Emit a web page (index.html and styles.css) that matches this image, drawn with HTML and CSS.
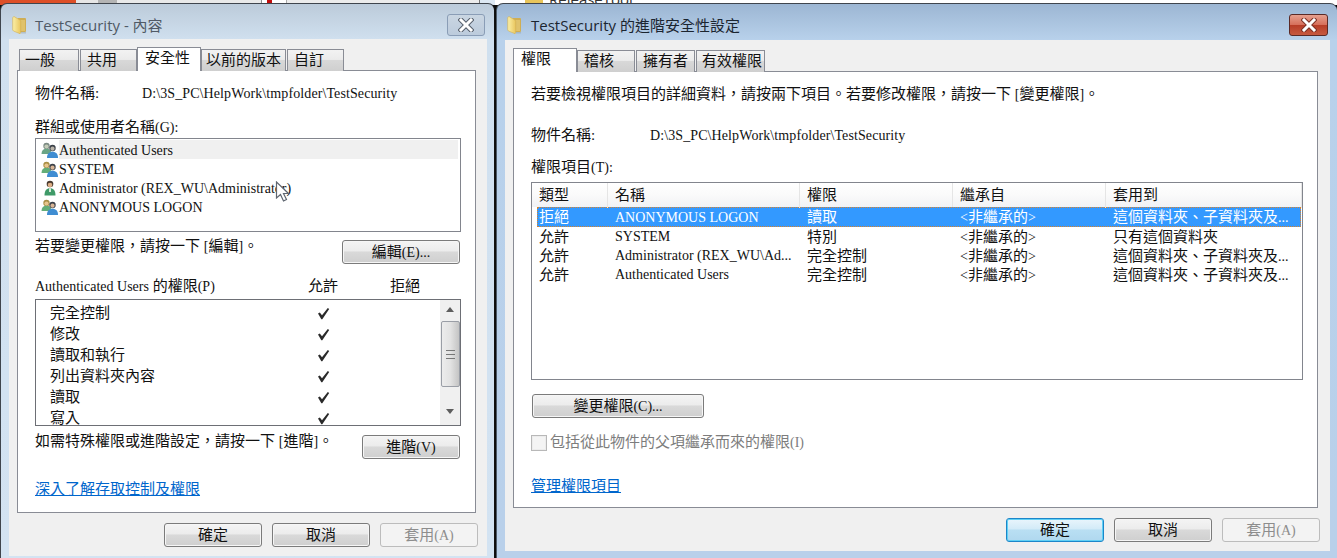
FILE: index.html
```html
<!DOCTYPE html>
<html lang="zh-Hant">
<head>
<meta charset="utf-8">
<title>TestSecurity</title>
<link rel="stylesheet" href="styles.css">
</head>
<body>
<svg class="defs" width="0" height="0" aria-hidden="true">
  <defs>
    <linearGradient id="fg" x1="0" x2="1" y1="0" y2="0">
      <stop offset="0" stop-color="#fbf0a8"/>
      <stop offset="1" stop-color="#e9c65e"/>
    </linearGradient>
    <symbol id="folder" viewBox="0 0 15 18">
      <path d="M6 2h7.500l.5 1v12.500l-1 .5H6z" fill="#cfae55"/>
      <path d="M7.500 4h5.500v11H7.500z" fill="#e0c26b"/>
      <path d="M.7 1.500 2 .5l6 3.500.7 1v12l-.7.700L1.500 15 .7 14z" fill="url(#fg)" stroke="#d2ae50" stroke-width=".6"/>
      <path d="M9 16h5v1.500H9z" fill="#9aa3a8" opacity=".5"/>
    </symbol>
    <symbol id="user" viewBox="0 0 16 16">
      <circle cx="8" cy="4" r="3.300" fill="#4a3b30"/>
      <path d="M2.500 15.500c0-5 2-7.300 5.500-7.300s5.500 2.300 5.500 7.300z" fill="#3f9a68"/>
      <circle cx="8" cy="5" r="2.300" fill="#dcae86"/>
      <path d="M7 8.300h2V12H7z" fill="#d8e8d8"/>
    </symbol>
    <symbol id="users" viewBox="0 0 18 16">
      <circle cx="5.500" cy="4" r="3.200" fill="#a98f45"/>
      <circle cx="5.500" cy="4.600" r="2.100" fill="#e8c58e"/>
      <path d="M.5 12c0-3.500 1.800-5.200 5-5.200s5 1.700 5 5.200z" fill="#63ad78"/>
      <circle cx="11.500" cy="6" r="3.200" fill="#3b4149"/>
      <circle cx="11.500" cy="6.700" r="2.100" fill="#d8b596"/>
      <path d="M6 16c0-4 2-6.200 5.500-6.200S17 12 17 16z" fill="#3f8dd2"/>
    </symbol>
    <symbol id="usersg" viewBox="0 0 18 16">
      <circle cx="5.500" cy="4" r="3.200" fill="#7d8b84"/>
      <circle cx="5.500" cy="4.600" r="2.100" fill="#c4cbb8"/>
      <path d="M.5 12c0-3.500 1.800-5.200 5-5.200s5 1.700 5 5.200z" fill="#6aa586"/>
      <circle cx="11.500" cy="6" r="3.200" fill="#3b4149"/>
      <circle cx="11.500" cy="6.700" r="2.100" fill="#b9b3a8"/>
      <path d="M6 16c0-4 2-6.200 5.500-6.200S17 12 17 16z" fill="#3f8dd2"/>
    </symbol>
    <symbol id="check" viewBox="0 0 13 13">
      <path d="M1 6.500 2.800 5.500 5 8.300 10.800 1 12.200 2 5.300 12.300H4.300z" fill="#2a2a2a"/>
    </symbol>
    <symbol id="xmark" viewBox="0 0 16 14">
      <path d="M3 2l10 10M13 2 3 12" stroke-linecap="square" fill="none" stroke="currentColor" stroke-width="5"/>
      <path d="M3 2l10 10M13 2 3 12" stroke-linecap="square" fill="none" stroke="#fff" stroke-width="3"/>
    </symbol>
  </defs>
</svg>

<div class="backdrop">
  <i class="seg seg-red"></i><i class="seg seg-grey"></i><i class="seg seg-dark"></i><i class="seg seg-light"></i><i class="seg seg-tab"></i><i class="seg seg-crimson"></i><i class="seg seg-white"></i><i class="seg seg-tab2"></i><i class="seg seg-sky"></i><i class="seg seg-gap"></i>
  <i class="seg seg-folder"></i>
  <i class="seg seg-pane"><span class="peek">ReleaseTool</span></i>
</div>

<section class="win win-left">
  <header class="titlebar">
    <svg class="ticon"><use href="#folder"/></svg>
    <h1 class="ttext">TestSecurity - 內容</h1>
    <span class="close close-off"><svg class="xicon"><use href="#xmark"/></svg></span>
  </header>
  <div class="client client-left">
    <nav class="tabs">
      <span class="tab t-a">一般</span>
      <span class="tab t-b">共用</span>
      <span class="tab active t-c">安全性</span>
      <span class="tab t-d">以前的版本</span>
      <span class="tab t-e">自訂</span>
    </nav>
    <div class="panel panel-left">
      <div class="objrow"><span class="objlabel">物件名稱:</span><span class="lat path">D:\3S_PC\HelpWork\tmpfolder\TestSecurity</span></div>
      <div class="lbl lbl-group">群組或使用者名稱<span class="lat">(G):</span></div>
      <ul class="userlist">
        <li class="u selu"><svg class="uicon"><use href="#usersg"/></svg><span class="ubar lat">Authenticated Users</span></li>
        <li class="u"><svg class="uicon"><use href="#users"/></svg><span class="ubar lat">SYSTEM</span></li>
        <li class="u"><svg class="uicon"><use href="#user"/></svg><span class="ubar lat">Administrator (REX_WU\Administrator)</span></li>
        <li class="u"><svg class="uicon"><use href="#users"/></svg><span class="ubar lat">ANONYMOUS LOGON</span></li>
        <li class="cursor"><svg width="16" height="22" viewBox="0 0 16 22"><path d="M1.500 1v16l4-3.500 3 6.500 3-1.500-3-6h5z" fill="#fff" stroke="#5f6670" stroke-width="1.200"/></svg></li>
      </ul>
      <div class="actrow actrow-a">
        <span>若要變更權限&#xFF0C;請按一下 <span class="lat">[</span>編輯<span class="lat">]</span>。</span>
        <button class="btn btn-edit">編輯<span class="lat">(E)...</span></button>
      </div>
      <div class="permhead"><span class="permtitle"><span class="lat">Authenticated Users</span> 的權限<span class="lat">(P)</span></span><span class="pa">允許</span><span class="pd">拒絕</span></div>
      <div class="permbox">
        <div class="permrows">
          <div class="pr"><span>完全控制</span><svg class="chk"><use href="#check"/></svg></div>
          <div class="pr"><span>修改</span><svg class="chk"><use href="#check"/></svg></div>
          <div class="pr"><span>讀取和執行</span><svg class="chk"><use href="#check"/></svg></div>
          <div class="pr"><span>列出資料夾內容</span><svg class="chk"><use href="#check"/></svg></div>
          <div class="pr"><span>讀取</span><svg class="chk"><use href="#check"/></svg></div>
          <div class="pr"><span>寫入</span><svg class="chk"><use href="#check"/></svg></div>
        </div>
        <div class="scroll">
          <i class="arrow up"></i>
          <div class="thumb"><i class="grip"></i></div>
          <i class="arrow down"></i>
        </div>
      </div>
      <div class="actrow actrow-b">
        <span>如需特殊權限或進階設定&#xFF0C;請按一下 <span class="lat">[</span>進階<span class="lat">]</span>。</span>
        <button class="btn btn-adv">進階<span class="lat">(V)</span></button>
      </div>
      <a class="link link-left" href="#">深入了解存取控制及權限</a>
    </div>
    <div class="foot foot-left">
      <button class="btn btn-foot">確定</button>
      <button class="btn btn-foot">取消</button>
      <button class="btn btn-foot off">套用<span class="lat">(A)</span></button>
    </div>
  </div>
</section>

<section class="win win-right">
  <header class="titlebar titlebar-r">
    <svg class="ticon"><use href="#folder"/></svg>
    <h1 class="ttext dark">TestSecurity 的進階安全性設定</h1>
    <span class="close close-red"><svg class="xicon"><use href="#xmark"/></svg></span>
  </header>
  <div class="client client-right">
    <nav class="tabs tabs-r">
      <span class="tab active r-a">權限</span>
      <span class="tab r-b">稽核</span>
      <span class="tab r-c">擁有者</span>
      <span class="tab r-d">有效權限</span>
    </nav>
    <div class="panel panel-right">
      <p class="desc">若要檢視權限項目的詳細資料&#xFF0C;請按兩下項目。若要修改權限&#xFF0C;請按一下 <span class="lat">[</span>變更權限<span class="lat">]</span>。</p>
      <div class="objrow objrow-r"><span class="objlabel">物件名稱:</span><span class="lat path">D:\3S_PC\HelpWork\tmpfolder\TestSecurity</span></div>
      <div class="lbl lbl-entries">權限項目<span class="lat">(T):</span></div>
      <div class="table">
        <div class="thead">
          <span class="th">類型</span><span class="th">名稱</span><span class="th">權限</span><span class="th">繼承自</span><span class="th">套用到</span>
        </div>
        <div class="tr sel"><span>拒絕</span><span class="lat">ANONYMOUS LOGON</span><span>讀取</span><span><span class="lat">&lt;</span>非繼承的<span class="lat">&gt;</span></span><span>這個資料夾、子資料夾及<span class="lat">...</span></span></div>
        <div class="tr"><span>允許</span><span class="lat">SYSTEM</span><span>特別</span><span><span class="lat">&lt;</span>非繼承的<span class="lat">&gt;</span></span><span>只有這個資料夾</span></div>
        <div class="tr"><span>允許</span><span class="lat">Administrator (REX_WU\Ad...</span><span>完全控制</span><span><span class="lat">&lt;</span>非繼承的<span class="lat">&gt;</span></span><span>這個資料夾、子資料夾及<span class="lat">...</span></span></div>
        <div class="tr"><span>允許</span><span class="lat">Authenticated Users</span><span>完全控制</span><span><span class="lat">&lt;</span>非繼承的<span class="lat">&gt;</span></span><span>這個資料夾、子資料夾及<span class="lat">...</span></span></div>
      </div>
      <button class="btn btn-change">變更權限<span class="lat">(C)...</span></button>
      <div class="inherit"><i class="cb"></i><span>包括從此物件的父項繼承而來的權限<span class="lat">(I)</span></span></div>
      <a class="link link-right" href="#">管理權限項目</a>
    </div>
    <div class="foot foot-right">
      <button class="btn btn-foot def">確定</button>
      <button class="btn btn-foot">取消</button>
      <button class="btn btn-foot off">套用<span class="lat">(A)</span></button>
    </div>
  </div>
</section>
</body>
</html>
```
FILE: styles.css
```css
* { box-sizing: border-box; }
html, body { margin: 0; padding: 0; }
body {
  width: 1337px;
  height: 558px;
  overflow: hidden;
  position: relative;
  background: #0c0c0c;
  font-family: "Liberation Serif", "Noto Sans CJK TC", serif;
  font-size: 15px;
  line-height: 19px;
  color: #111;
}
.lat { font-size: 14px; }
.path { letter-spacing: .1px; }
.defs { position: absolute; }

.backdrop { display: flex; height: 5px; overflow: hidden; background: #fff; }
.seg { display: block; height: 5px; flex: none; }
.seg-red { width: 76px; background: #dd4f28; }
.seg-grey { width: 22px; background: #e6e6e6; }
.seg-dark { width: 19px; background: #b4b4b4; }
.seg-light { width: 144px; background: #e9e9e9; }
.seg-tab { width: 6px; background: #fff; border-left: 1px solid #8c8c8c; }
.seg-crimson { width: 5px; background: #c00d0d; }
.seg-white { width: 15px; background: #fff; border-right: 1px solid #aaa; }
.seg-tab2 { width: 193px; background: #ececec; border-right: 1px solid #777; }
.seg-sky { width: 15px; background: #dce8f3; }
.seg-gap { width: 30px; background: #fff; }
.seg-folder { width: 18px; background: #e8c55b; }
.seg-pane { width: 794px; background: #fff; padding-left: 6px; overflow: hidden; }
.peek { display: block; margin-top: -9px; font: 15px/16px "Open Sans", sans-serif; color: #333; }

.win {
  position: absolute;
  top: 3px;
  border: 1px solid #3f454d;
  border-bottom: 0;
  border-radius: 7px 7px 0 0;
  overflow: hidden;
}
.win-left { left: 0; width: 495px; height: 555px; background: linear-gradient(#bccbda, #d0e0ef 36px, #d3e3f2); border-right-color: #111; }
.win-right { left: 496px; width: 841px; height: 555px; background: linear-gradient(#9cb6d3, #b8d1eb 36px, #b9d0ea); border-left-color: #4c5967; border-right: 0; }

.titlebar { height: 35px; display: flex; align-items: center; padding: 7px 9px 0 11px; }
.titlebar-r { padding: 7px 9px 0 10px; }
.ticon { width: 15px; height: 18px; flex: none; }
.ttext { margin: 0 0 0 8px; font: 400 15px/20px "Open Sans", "Noto Sans CJK TC", sans-serif; color: #505a66; flex: 1; }
.ttext.dark { color: #1b2530; margin-left: 9px; }
.close { display: flex; width: 38px; height: 22px; align-items: center; justify-content: center; border-radius: 3px; }
.close-off { border: 1px solid #8a9db6; background: linear-gradient(#cad6e2, #bccbdc); color: #565f6b; }
.close-red { border: 1px solid #5b2a26; width: 39px; background: linear-gradient(#e6a08e, #d6705c 48%, #b73d28 52%, #c65a40); color: #7c3226; }
.xicon { width: 16px; height: 14px; }

.client { background: #f0f0f0; display: flex; flex-direction: column; }
.client-left { margin: 0 7px 0 8px; height: 517px; padding: 8px 0 0 8px; }
.client-right { margin: 1px 7px 0 8px; height: 511px; padding: 8px 0 0 8px; }

.tabs { display: flex; height: 24px; align-items: flex-end; position: relative; z-index: 1; margin-bottom: -1px; padding-left: 2px; }
.tabs-r { padding-left: 0; }
.tab {
  height: 22px;
  flex: none;
  padding-left: 6px;
  border: 1px solid #898c95;
  border-bottom: 0;
  background: linear-gradient(#f2f2f2, #ebebeb 45%, #d8d8d8 50%, #cfcfcf);
  line-height: 21px;
  white-space: nowrap;
}
.tab.active { height: 24px; background: #fff; line-height: 21px; }
.t-a { width: 60px; margin-right: 1px; padding-left: 5px; }
.t-b { width: 57px; }
.t-c { width: 64px; padding-left: 7px; }
.t-d { width: 85px; margin-right: 1px; padding-left: 4px; }
.t-e { width: 57px; }
.r-a { width: 64px; padding-left: 7px; }
.r-b { width: 58px; }
.r-c { width: 59px; margin-left: 1px; margin-right: 1px; }
.r-d { width: 69px; padding-left: 5px; }

.panel { background: #fff; border: 1px solid #898c95; display: flex; flex-direction: column; padding: 0 17px; }
.panel-left { width: 459px; height: 443px; }
.panel-right { width: 805px; height: 437px; }

.objrow { display: flex; padding-top: 13px; height: 32px; white-space: nowrap; }
.objlabel { width: 107px; flex: none; }
.lbl-group { margin-top: 15px; }
.userlist { margin: 1px 0 0; padding: 1px 2px 0 1px; list-style: none; width: 426px; height: 94px; border: 1px solid #82858d; position: relative; }
.u { display: flex; height: 19px; align-items: center; padding-left: 4px; white-space: nowrap; }
.selu .ubar { background: #f0f0f0; flex: 1; }
.uicon { width: 18px; height: 16px; flex: none; }
.ubar { display: block; height: 19px; line-height: 21px; }
.cursor { position: absolute; left: 239px; top: 42px; line-height: 0; }

.actrow { display: flex; justify-content: space-between; align-items: flex-start; width: 425px; }
.actrow-a { margin-top: 5px; }
.actrow-b { margin-top: 6px; }

.btn {
  display: block;
  flex: none;
  height: 24px;
  padding: 0;
  font: inherit;
  color: #111;
  line-height: 21px;
  text-align: center;
  border: 1px solid #7b7b7b;
  border-radius: 3px;
  background: linear-gradient(#f4f4f4, #ececec 45%, #d9d9d9 50%, #cfcfcf);
  box-shadow: inset 0 0 0 1px #f6f6f6;
}
.btn-edit { width: 118px; margin-top: 3px; }
.btn-adv { width: 98px; margin-top: 3px; }
.btn-foot { width: 98px; }
.btn.off { color: #8d8d8d; border-color: #bcbcbc; background: #f3f3f3; box-shadow: none; }
.btn.def { border-color: #1c86c9; background: linear-gradient(#e9f5fc, #d3ebf8 45%, #b9dff3 50%, #b0d8ef); box-shadow: inset 0 0 0 1px #5fd0f5; }
.btn-change { width: 172px; margin: 14px 0 0 1px; }

.permhead { display: flex; margin-top: 13px; position: relative; }
.permtitle { width: 273px; }
.pa { width: 82px; }
.permbox { margin-top: 3px; width: 426px; height: 127px; border: 1px solid #6d6f75; display: flex; overflow: hidden; }
.permrows { flex: 1; padding: 3px 0 0 14px; }
.pr { display: flex; height: 21px; align-items: center; position: relative; }
.chk { position: absolute; left: 267px; top: 4px; width: 13px; height: 13px; }
.scroll { width: 20px; flex: none; background: #f0f0f0; display: flex; flex-direction: column; align-items: center; justify-content: flex-start; }
.arrow { display: block; width: 0; height: 0; border: 4.500px solid transparent; }
.arrow.up { margin-top: 7px; border-top: 0; border-bottom: 5px solid #5e5e5e; }
.arrow.down { margin-top: 22px; border-bottom: 0; border-top: 5px solid #5e5e5e; }
.thumb { margin-top: 9px; width: 19px; height: 66px; border: 1px solid #9a9ea6; border-radius: 2px; background: linear-gradient(90deg, #ececec, #e2e2e2 50%, #c4c4c4); display: flex; align-items: center; justify-content: center; flex: none; }
.grip { display: block; width: 9px; height: 9px; border-top: 1px solid #777; border-bottom: 1px solid #777; background: linear-gradient(transparent 3px, #777 3px, #777 4px, transparent 4px); }

.link { color: #0066cc; text-decoration: underline; align-self: flex-start; }
.link-left { margin-top: 21px; }
.link-right { margin-top: 25px; }

.foot { display: flex; gap: 10px; justify-content: flex-end; margin-top: 10px; }
.foot-left { width: 461px; }
.foot-right { width: 807px; }

.desc { margin: 0; padding-top: 13px; height: 32px; }
.objrow-r { margin-top: 22px; height: 19px; padding-top: 0; }
.objrow-r .objlabel { width: 119px; }
.lbl-entries { margin-top: 13px; }
.table { margin-top: 5px; width: 772px; height: 198px; border: 1px solid #82858d; }
.thead, .tr { display: grid; grid-template-columns: 76px 192px 153px 153px 1fr; white-space: nowrap; }
.thead { height: 24px; background: linear-gradient(#fff, #fafafa 50%, #f1f2f4); }
.th { padding-left: 7px; line-height: 25px; border-right: 1px solid #e5e5e5; }
.tr { height: 19px; margin: 0 1px 0 5px; line-height: 20px; }
.tr > span { padding-left: 2px; }
.tr.sel { height: 20px; line-height: 21px; background: #3399ff; color: #fff; outline: 1px dotted #d9822b; outline-offset: -1px; }
.inherit { display: flex; align-items: center; margin-top: 15px; color: #7d7d7d; height: 19px; gap: 3px; }
.cb { display: block; width: 16px; height: 16px; border: 1px solid #b8b8b8; background: #f4f4f4; box-shadow: inset 0 0 0 1px #ececec; }
```
